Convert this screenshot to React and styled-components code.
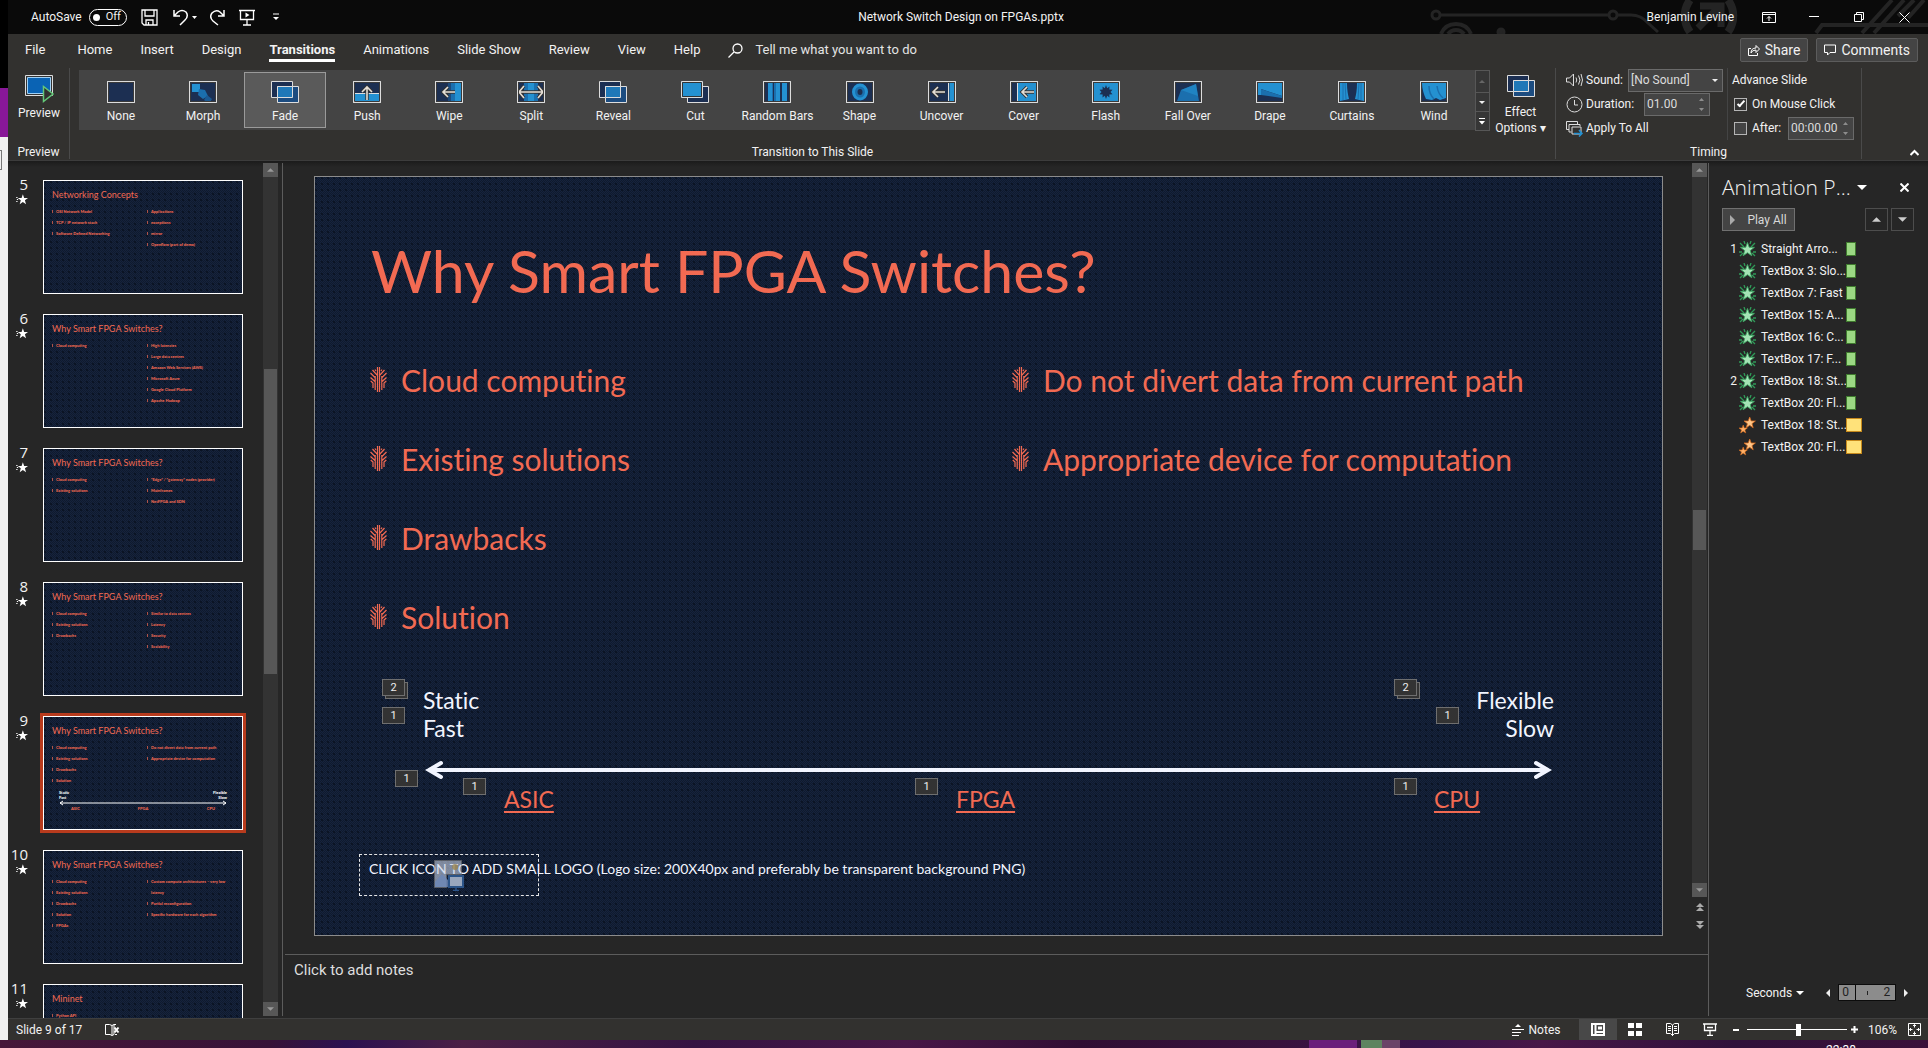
import React from "react";
import styled, { createGlobalStyle, css } from "styled-components";

const UI = `Roboto, "Open Sans", "Noto Sans", sans-serif`;
const LIGHT = `"Open Sans", "Noto Sans", sans-serif`;
const DECK = `Lato, "Open Sans", sans-serif`;
const CORAL = "#f26a52";

const Global = createGlobalStyle`
  *, *::before, *::after { box-sizing: border-box; }
  html, body, #root { height: 100%; margin: 0; }
  body { background: #262626; color: #f2f2f2; font: 12px/16px ${UI}; overflow: hidden; }
  button, input, select, textarea { font: inherit; color: inherit; margin: 0; }
  svg { display: block; flex: none; }
`;

/* ---------- shell ---------- */
const Desktop = styled.div`
  display: grid;
  grid-template: minmax(0, 1fr) 8px / 8px minmax(0, 1fr);
  height: 100vh;
  overflow: hidden;
`;
const BehindWindow = styled.aside`
  display: flex;
  flex-direction: column;
  background: #f0f0f0;
  overflow: hidden;
`;
const BehindBlock = styled.div`
  height: ${(p) => p.$h}px;
  background: ${(p) => p.$bg};
  ${(p) => p.$box && css`
    margin-top: 13px;
    width: 2px;
    border: solid #777;
    border-width: 1px 1px 1px 0;
  `}
`;
const Taskbar = styled.footer`
  grid-column: 1 / -1;
  display: flex;
  justify-content: flex-end;
  overflow: hidden;
  background: linear-gradient(90deg, #471739 0, #371237 14%, #2b1150 18%, #4b2045 24%, #351342 36%, #481747 47%, #300e33 56%, #38123c 66%, #37144a 74%, #481747 80%, #30113a 90%, #3b1039 100%);
`;
const TaskItem = styled.span`
  width: ${(p) => p.$w}px;
  margin-right: ${(p) => p.$gap || 0}px;
  background: ${(p) => p.$bg};
`;
const Clock = styled.time`
  width: 102px;
  padding-top: 2px;
  color: #fff;
`;
const Window = styled.div`
  display: flex;
  flex-direction: column;
  min-width: 0;
  min-height: 0;
`;
const Plain = styled.button`
  display: flex;
  align-items: center;
  justify-content: center;
  padding: 0;
  border: 0;
  background: none;
  white-space: nowrap;
`;

/* ---------- title bar ---------- */
const TitleBar = styled.header`
  position: relative;
  display: grid;
  grid-template-columns: 1fr auto 1fr;
  align-items: center;
  height: 34px;
  padding: 0 14px 0 0;
  background: #0a0a0a;
  flex: none;
`;
const Circuit = styled.svg`
  position: absolute;
  right: 0;
  top: 0;
`;
const QuickBar = styled.div`
  display: flex;
  align-items: center;
  gap: ${(p) => p.$gap}px;
  padding-left: ${(p) => p.$inset || 0}px;
`;
const Toggle = styled.button`
  display: flex;
  align-items: center;
  gap: 6px;
  width: 38px;
  height: 17px;
  padding: 0 3px;
  border: 1px solid #fff;
  border-radius: 9px;
  background: none;
  font-size: 11px;
  &::before { content: ""; width: 7px; height: 7px; border-radius: 50%; background: #fff; }
`;
const DocName = styled.h1`
  margin: 0;
  font: inherit;
`;
const WindowTools = styled.div`
  position: relative;
  display: flex;
  align-items: center;
  justify-content: flex-end;
  gap: 25px;
`;
const Tool = styled(Plain)`
  width: ${(p) => p.$w || 20}px;
  height: 20px;
`;

/* ---------- ribbon ---------- */
const TabRow = styled.nav`
  display: flex;
  align-items: center;
  gap: 28px;
  height: 32px;
  padding: 0 10px 0 17px;
  background: #32312f;
  flex: none;
`;
const Tab = styled(Plain)`
  height: 24px;
  font-weight: ${(p) => (p.$on ? 700 : 400)};
  border-bottom: 3px solid ${(p) => (p.$on ? "#fff" : "transparent")};
  border-top: 3px solid transparent;
  font-size: 13px;
  &:first-child { margin-right: 4px; }
`;
const Search = styled.label`
  display: flex;
  align-items: center;
  gap: 12px;
  flex: 1;
`;
const SearchBox = styled.input`
  flex: 1;
  padding: 0;
  border: 0;
  background: none;
  font-size: 13px;
  outline: 0;
  &::placeholder { color: #e4e4e4; opacity: 1; }
`;
const RowActions = styled.div`
  display: flex;
  gap: 8px;
`;
const Action = styled(Plain)`
  gap: 5px;
  height: 24px;
  margin-top: -1px;
  padding: 0 7px;
  border: 1px solid #5c5c5c;
  border-radius: 2px;
  background: #444;
  font-size: 14px;
`;
const Ribbon = styled.section`
  display: flex;
  height: 95px;
  padding: 2px 0 1px;
  background: #32312f;
  border-bottom: 1px solid #3c3c3c;
  flex: none;
`;
const Group = styled.div`
  display: flex;
  flex-direction: column;
  justify-content: space-between;
  flex: ${(p) => (p.$w ? `0 0 ${p.$w}px` : 1)};
  min-width: 0;
  border-right: 1px solid #4a4a4a;
`;
const GroupName = styled.div`
  text-align: center;
  line-height: 14px;
`;
const GroupBody = styled.div`
  display: flex;
  padding: ${(p) => p.$pad || "2px 0 0 9px"};
`;
const BigButton = styled(Plain)`
  flex-direction: column;
  justify-content: flex-start;
  width: ${(p) => p.$w}px;
  padding: 5px ${(p) => p.$right || 0}px 0 0;
  gap: ${(p) => p.$gap}px;
`;
const Gallery = styled.div`
  display: grid;
  grid-template-columns: repeat(17, minmax(0, 1fr)) 15px;
  flex: 1;
  height: 60px;
  padding-left: 1px;
  background: #444;
`;
const Effect = styled(Plain)`
  flex-direction: column;
  gap: 5px;
  height: 56px;
  margin: 2px 0;
  padding-top: 5px;
  border: 1px solid ${(p) => (p.$on ? "#9a9a9a" : "transparent")};
  background: ${(p) => (p.$on ? "#5a5a5a" : "none")};
`;
const GalleryScroll = styled.div`
  display: grid;
  grid-template-rows: 22px 19px 19px;
`;
const ScrollCell = styled(Plain)`
  border: 1px solid #575757;
  background: #363636;
  margin-bottom: -1px;
`;
const Timing = styled.div`
  display: grid;
  grid-template-columns: 161px 1fr;
  padding: 0 0 0 10px;
`;
const Rows = styled.div`
  display: grid;
  grid-template-rows: 24px 24px 24px;
  align-items: center;
  padding-left: ${(p) => (p.$line ? 4 : 0)}px;
  border-left: ${(p) => (p.$line ? "1px solid #444" : "0")};
`;
const Field = styled.div`
  display: flex;
  align-items: center;
  gap: 3px;
  white-space: nowrap;
`;
const ApplyAll = styled(Plain)`
  justify-content: flex-start;
  gap: 3px;
`;
const FieldLabel = styled.label`
  width: ${(p) => (p.$w ? `${p.$w}px` : "auto")};
`;
const Boxed = css`
  height: 23px;
  border: 1px solid #6a6a6a;
  background: #444;
  color: #dcdcdc;
`;
const SoundSelect = styled.select`
  ${Boxed}
  width: 95px;
  padding: 0 2px;
  border-radius: 0;
  appearance: none;
`;
const SelectWrap = styled.span`
  display: grid;
  align-items: center;
  & > * { grid-area: 1 / 1; }
  & > svg { justify-self: end; margin-right: 5px; pointer-events: none; }
`;
const Spinner = styled.span`
  ${Boxed}
  display: flex;
  align-items: center;
  width: 66px;
  padding: 0 4px 0 2px;
`;
const SpinInput = styled.input`
  flex: 1;
  width: 0;
  padding: 0;
  border: 0;
  background: none;
  outline: 0;
`;
const Check = styled.input`
  appearance: none;
  width: 13px;
  height: 13px;
  margin: 0 2px 0 2px;
  border: 1px solid #b5b5b5;
  background: ${(p) => (p.defaultChecked ? "#333" : "#444")};
  display: grid;
  place-items: center;
  &:checked::after { content: ""; width: 4px; height: 8px; margin-top: -2px; border: solid #fff; border-width: 0 2px 2px 0; transform: rotate(42deg); }
`;
const Collapse = styled(Plain)`
  width: 66px;
  align-self: flex-end;
  height: 14px;
  padding-left: 38px;
`;

/* ---------- workspace ---------- */
const Workspace = styled.main`
  display: grid;
  grid-template-columns: 275px minmax(0, 1fr) 219px;
  flex: 1;
  min-height: 0;
  padding: 2px 0;
  background: linear-gradient(#1b1b1b, #262626 6px);
`;
const ThumbPane = styled.section`
  display: flex;
  border-right: 1px solid #5c5c5c;
  min-height: 0;
`;
const ThumbList = styled.ol`
  list-style: none;
  flex: 1;
  margin: 0 0 -2px;
  padding: 14px 0 0;
  overflow: hidden;
`;
const ThumbItem = styled.li`
  display: grid;
  grid-template-columns: 20px 206px;
  gap: 12px;
  height: 134px;
`;
const ThumbMeta = styled.div`
  display: flex;
  flex-direction: column;
  align-items: flex-end;
  font: 15px/14px ${LIGHT};
  gap: 3px;
`;
const dots = css`
  background-color: #121d33;
  background-image: radial-gradient(circle at 1px 1px, #0b1424 1px, transparent 1px),
    conic-gradient(#0f1a2d 25%, #16233d 0 50%, #0f1a2d 0 75%, #16233d 0);
  background-size: 6px 6px, 2px 2px;
`;
const Thumb = styled.article`
  height: 120px;
  border: 3px solid ${(p) => (p.$on ? "#b83b1d" : "transparent")};
`;
const ThumbSlide = styled.div`
  ${dots}
  height: 114px;
  padding: 6px 8px;
  border: 1px solid #fff;
  color: ${CORAL};
  overflow: hidden;
`;
const ThumbTitle = styled.h2`
  margin: 0 0 3px;
  font: 9px/16px ${DECK};
`;
const ThumbCols = styled.div`
  display: grid;
  grid-template-columns: 95px 1fr;
  font: 900 4px/11px ${DECK};
`;
const ThumbLines = styled.ul`
  margin: 0;
  padding: 0 0 0 4px;
  list-style: none;
  li { position: relative; white-space: pre-line; }
  li::before { content: ""; position: absolute; left: -4px; top: 4px; width: 1px; height: 3px; background: ${CORAL}; opacity: 0.7; }
`;
const MiniScale = styled.div`
  display: grid;
  grid-template-columns: 1fr 1fr 1fr;
  margin: 4px 7px 0;
  font: 900 4px/5px ${DECK};
  color: #fff;
  svg { grid-column: 1 / -1; width: 100%; }
`;
const MiniCell = styled.span`
  padding: 0 ${(p) => p.$pad || 0}px;
  text-align: ${(p) => p.$align || "left"};
  color: ${(p) => p.$color || "#fff"};
  white-space: pre-line;
`;
const ScrollBar = styled.div`
  display: flex;
  flex-direction: column;
  flex: none;
  width: 15px;
  background: #333;
  margin-right: ${(p) => p.$right}px;
`;
const ScrollButton = styled(Plain)`
  height: 14px;
  background: #575757;
  flex: none;
`;
const Track = styled.div`
  display: grid;
  grid-template-rows: ${(p) => p.$rows};
  flex: 1;
  &::before { content: ""; }
`;
const Grip = styled.div`
  margin: 0 1px;
  background: #575757;
`;
const Pager = styled.div`
  display: flex;
  flex-direction: column;
  align-items: center;
  gap: 10px;
  height: 57px;
  padding-top: 6px;
  background: #262626;
`;

const Editor = styled.section`
  display: grid;
  grid-template-rows: minmax(0, 1fr) 62px;
  border-right: 1px solid #5c5c5c;
  min-height: 0;
`;
const Stage = styled.div`
  display: flex;
  min-height: 0;
`;
const StageArea = styled.div`
  flex: 1;
  min-width: 0;
  padding: 13px 29px 0 31px;
`;
const Slide = styled.article`
  ${dots}
  position: relative;
  aspect-ratio: 1349 / 760;
  border: 1px solid #8c8c8c;
  color: ${CORAL};
  font-family: ${DECK};
  font-variant-ligatures: none;
  overflow: hidden;
`;
const SlideTitle = styled.h2`
  margin: 54px 0 0 56px;
  font-size: 59px;
  line-height: 80px;
  font-weight: 400;
`;
const Columns = styled.div`
  display: grid;
  grid-template-columns: 642px 1fr;
  margin: 44px 0 0 55px;
`;
const Bullets = styled.ul`
  margin: 0;
  padding: 0;
  list-style: none;
`;
const Bullet = styled.li`
  display: flex;
  align-items: center;
  gap: 14px;
  height: 49px;
  margin-bottom: 30px;
  font-size: 30px;
`;
const Scale = styled.div`
  margin: 15px 108px 0 108px;
  font-size: 23px;
  line-height: 28px;
`;
const ScaleEnds = styled.div`
  display: flex;
  justify-content: space-between;
  color: #f2f5ff;
  white-space: pre-line;
  div + div { text-align: right; }
`;
const Arrow = styled.svg`
  width: 100%;
  height: 20px;
  margin-top: 18px;
`;
const Devices = styled.div`
  display: grid;
  grid-template-columns: 452fr 478fr 120fr;
  justify-items: start;
  padding: 5px 0 0 81px;
`;
const Device = styled.a`
  color: ${CORAL};
  text-underline-offset: 3px;
`;
const Tag = styled.span`
  position: absolute;
  left: ${(p) => p.$x}px;
  top: ${(p) => p.$y}px;
  width: 23px;
  height: 17px;
  border: 1px solid #6f6f6f;
  background: #333;
  color: #eee;
  font: 11px/15px ${UI};
  text-align: center;
  box-shadow: ${(p) => (p.$stack ? "3px 3px 0 -1px #333, 3px 3px 0 0 #6f6f6f" : "none")};
`;
const LogoSlot = styled.div`
  position: absolute;
  left: 44px;
  top: 677px;
  width: 180px;
  height: 42px;
  padding: 4px 9px;
  border: 1px dashed #e6e6e6;
  color: #f2f5ff;
  font-size: 14px;
  line-height: 20px;
  white-space: nowrap;
`;
const SlotIcon = styled.svg`
  position: absolute;
  left: 74px;
  top: 5px;
`;
const Notes = styled.textarea`
  padding: 5px 9px;
  border: 0;
  border-top: 1px solid #5c5c5c;
  margin-left: 2px;
  background: none;
  resize: none;
  outline: 0;
  font-size: 15px;
  line-height: 20px;
  &::placeholder { color: #dedede; opacity: 1; }
`;

/* ---------- animation pane ---------- */
const AnimPane = styled.aside`
  display: flex;
  flex-direction: column;
  padding: 9px 14px 15px 13px;
`;
const PaneHead = styled.div`
  display: flex;
  align-items: center;
  height: 30px;
  margin-bottom: 6px;
`;
const PaneTitle = styled.h2`
  width: 135px;
  margin: 0;
  font: 300 21px/30px ${LIGHT};
  white-space: nowrap;
`;
const PaneTools = styled.div`
  display: flex;
  gap: 3px;
  justify-content: flex-end;
  margin-bottom: 7px;
`;
const PaneButton = styled(Plain)`
  height: 23px;
  width: ${(p) => p.$w || 23}px;
  gap: 12px;
  border: 1px solid ${(p) => (p.$w ? "#707070" : "#4d4d4d")};
  background: ${(p) => (p.$w ? "#444" : "none")};
  margin-right: ${(p) => (p.$w ? "auto" : 0)};
  color: #d8d8d8;
`;
const AnimList = styled.ol`
  list-style: none;
  flex: 1;
  margin: 0;
  padding: 0;
`;
const AnimItem = styled.li`
  display: grid;
  grid-template-columns: 15px 20px 81px auto;
  gap: 2px;
  align-items: center;
  justify-content: start;
  height: 22px;
  white-space: nowrap;
`;
const Order = styled.span`
  text-align: right;
`;
const Bar = styled.span`
  width: ${(p) => (p.$exit ? 16 : 10)}px;
  height: 14px;
  margin-left: 2px;
  border: 1px solid ${(p) => (p.$exit ? "#c78a1c" : "#3f7a2e")};
  background: ${(p) => (p.$exit ? "#ffe27a" : "#9bd883")};
`;
const Timeline = styled.div`
  display: flex;
  align-items: center;
  gap: 5px;
  padding-left: 24px;
`;
const Range = styled.div`
  display: grid;
  grid-template-columns: 16px 1fr;
  flex: none;
  width: 58px;
  height: 17px;
  margin: 0 3px;
  border: 1px solid #0c0c0c;
  background: #8c8c8c;
  color: #222;
  line-height: 15px;
`;
const RangeCell = styled.span`
  display: flex;
  justify-content: space-between;
  padding: 0 5px 0 ${(p) => (p.$wide ? 11 : 3)}px;
  border-left: ${(p) => (p.$wide ? "1px solid #0c0c0c" : "0")};
  i { align-self: center; width: 1px; height: 4px; background: #222; }
`;
const Unit = styled(Plain)`
  gap: 4px;
  margin-right: 17px;
`;

/* ---------- status bar ---------- */
const StatusBar = styled.div`
  display: flex;
  align-items: center;
  height: 22px;
  padding: 0 3px 0 8px;
  background: #32312f;
  border-top: 1px solid #3f3f3f;
  flex: none;
`;
const Spring = styled.span`
  flex: 1;
`;
const StatusButton = styled(Plain)`
  width: ${(p) => p.$w || 36}px;
  height: 21px;
  gap: 5px;
  background: ${(p) => (p.$on ? "#484848" : "none")};
`;
const Zoom = styled.input`
  appearance: none;
  width: 100px;
  height: 14px;
  margin: 0 3px;
  background: linear-gradient(#fff, #fff) no-repeat center / 100% 1px;
  &::-webkit-slider-thumb { appearance: none; width: 5px; height: 12px; background: #fff; }
`;
const Percent = styled.button`
  width: 45px;
  padding: 0 0 0 4px;
  border: 0;
  background: none;
`;

/* ---------- icons ---------- */
const Svg = ({ w, h, children, s = "#fff", f = "none", sw = 1, vb }) => (
  <svg width={w} height={h} viewBox={vb || `0 0 ${w} ${h}`} fill={f} stroke={s} strokeWidth={sw} aria-hidden="true">{children}</svg>
);
const Tri = ({ dir = "down", w = 7, c = "#eee" }) => {
  const d = { down: "M0 0H8L4 4Z", up: "M0 4H8L4 0Z" }[dir];
  return <Svg w={w} h={w / 2 + (w % 2) / 2} vb="0 0 8 4" s="none" f={c}><path d={d} /></Svg>;
};
const Side = ({ left, c = "#eee", s = 10 }) => (
  <Svg w={s / 2} h={s} vb="0 0 5 10" s="none" f={c}><path d={left ? "M5 0V10L0 5Z" : "M0 0V10L5 5Z"} /></Svg>
);
const D = "#1c2f52";
const B = "#2491d1";
const M = "#1b6fae";
const arrow = (d) => (
  <g fill="none"><path d={d} stroke="#333" strokeWidth="3.4" /><path d={d} stroke="#e6dfd6" strokeWidth="1.6" /></g>
);
const art = {
  None: null,
  Morph: <g stroke="none"><path d="M3 3h8v8H3z" fill={B} /><path d="m10 8 6 1 3 6-5 3-5-4z" fill={M} /><path d="m18 14 5 4-3 5-5-4z" fill="#1b5a94" /></g>,
  Push: <g><path d="M1.500 12.500h25v9h-25z" fill={B} stroke="#ddd" />{arrow("M14 19V6M9 11l5-5 5 5")}</g>,
  Wipe: <g><path d="M13 2h3v18h-3z" fill="#1c4a7c" stroke="none" /><path d="M16 2h4v18h-4z" fill={M} stroke="none" /><path d="M20 2h6v18h-6z" fill={B} stroke="none" />{arrow("M20 11H8M13 6l-5 5 5 5")}</g>,
  Split: <g><path d="M7 2h14v18H7z" fill={M} stroke="none" /><path d="M11 2h6v18h-6z" fill={B} stroke="none" />{arrow("M3 11H25M7 5l-5 6 5 6M21 5l5 6-5 6")}</g>,
  "Random Bars": <g stroke="none" fill={B}><path d="M5 2h4v18H5zM13 2h4v18h-4zM19 2h5v18h-5z" /><path fill={M} d="M11 2h2v18h-2zM9 2h1v18H9z" /></g>,
  Shape: <g stroke="none"><ellipse cx="14" cy="11" rx="8" ry="8.500" fill={B} /><ellipse cx="14" cy="11" rx="5" ry="5.500" fill={M} /><ellipse cx="14" cy="11" rx="2.500" ry="3" fill={D} /></g>,
  Uncover: <g><path d="M20.500 1v20" stroke="#ddd" /><path d="M21.500 2H26v18h-4.500z" fill={B} stroke="none" />{arrow("M17 11H5M10 6l-5 5 5 5")}</g>,
  Cover: <g><path d="M8 2h18v18H8z" fill={B} stroke="none" /><path d="M7.500 1v20" stroke="#ddd" />{arrow("M24 11H12M17 6l-5 5 5 5")}</g>,
  Flash: <g stroke="none"><path d="M2 2h24v18H2z" fill={B} /><path fill={D} d="m14 4 1.200 3.300L17.500 5.500l-.2 3L20.500 8.700 18.500 11l2 2.300-3.200.2.200 3-2.300-1.800L14 18l-1.200-3.300-2.300 1.800.2-3-3.200-.2L9.500 11l-2-2.300 3.200-.2-.2-3 2.300 1.800z" /></g>,
  "Fall Over": <g stroke="none"><path d="m3 20 4-11L22 3l3 17z" fill={M} /><path d="M7 9 22 3l2 12z" fill={B} opacity=".6" /></g>,
  Drape: <g stroke="none"><path d="M2 2h24v13L5 8v6H2z" fill={B} /><path d="m5 8 21 7v2L5 14z" fill={M} /></g>,
  Curtains: <g stroke="none"><path d="M2 2h7c0 7 1 12 2 16l-9 2zM26 2h-7c0 7-1 12-2 16l9 2z" fill={B} /><path d="M5 2v17M7 2l1 16M23 2v17M21 2l-1 16" stroke={M} /></g>,
  Wind: <g stroke="none"><path d="M2 2h24v15l-6 2-4-2-4 2-6-1C4 14 2 8 2 2z" fill={B} /><path d="M9 5q0 8 5 13M17 5q1 8 6 12" stroke={M} strokeWidth="1.500" fill="none" /></g>,
};
const Overlap = ({ cut }) => (
  <Svg w={28} h={22} s="#ddd">
    {cut ? (
      <g><path d="M6.500 5.500h21v16h-21z" fill={D} /><path d="M.5.500h21v16H.5z" fill={B} stroke="#ddd" /><path d="M1.500 1.500h19v14h-19z" stroke="#333" /></g>
    ) : (
      <g><path d="M.5.500h21v16H.5z" fill={D} /><path d="M6.500 5.500h21v16h-21z" fill="#1c4c80" /><path d="M6.500 5.500h15v11h-15z" fill="#1f78b8" /></g>
    )}
  </Svg>
);
const EffectIcon = ({ name }) =>
  ["Fade", "Reveal", "Cut"].includes(name) ? <Overlap cut={name === "Cut"} /> : (
    <Svg w={28} h={22} s="#ddd">
      <path d="M.5.500h27v21H.5z" fill={D} />
      {art[name]}
      <path d="M1.500 1.500h25v19h-25z" stroke="#3a3a3a" />
      <path d="M.5.500h27v21H.5z" />
    </Svg>
  );
const Leaf = () => (
  <Svg w={17} h={25} s={CORAL} sw={1.2}>
    <path d="M7.500 0v25M9.500 0v25M5.200 9v14M11.800 9v14M7 8 2.500 3M10 8 14.500 3M5.500 11 .5 6M11.500 11l5-5M5.500 15 .5 10.500M11.500 15l5-4.500M3 21v-5L.7 14M14 21v-5l2.300-2M6 4 5 2.500M11 4l1-1.500" />
  </Svg>
);
const StarPath = "M6 0l1.500 4.200H12L8.400 7 9.700 11.400 6 8.800 2.300 11.400 3.600 7 0 4.200h4.500z";
const MotionStar = () => (
  <Svg w={12} h={11} vb="0 0 14 12" s="none" f="#fff">
    <path transform="translate(2 0)" d={StarPath} /><path d="M0 3h2v1H0zM0 8h2v1H0zM1 5.500h1.500v1H1z" />
  </Svg>
);
const Entrance = () => (
  <Svg w={17} h={17} s="#2f9a58">
    <path d="M1 2l4 4M16 2l-4 4M1 15l3-3M16 15l-3-3M0 11h3M14 11h3M5 0l1 3M12 0l-1 3" strokeWidth="1.300" />
    <path transform="translate(1.500 1.500) scale(1.160)" d={StarPath} fill="#a5e3b5" stroke="#3fa763" strokeWidth=".8" />
  </Svg>
);
const Exit = () => (
  <Svg w={17} h={17} s="#d96a1a" sw={0.8}>
    <path transform="translate(5 0) scale(.95)" d={StarPath} fill="#ffc78a" /><path transform="translate(0 8) scale(.7)" d={StarPath} fill="#ffb066" />
  </Svg>
);

/* ---------- data ---------- */
const effects = ["None", "Morph", "Fade", "Push", "Wipe", "Split", "Reveal", "Cut", "Random Bars", "Shape", "Uncover", "Cover", "Flash", "Fall Over", "Drape", "Curtains", "Wind"];
const tabs = ["File", "Home", "Insert", "Design", "Transitions", "Animations", "Slide Show", "Review", "View", "Help"];
const why = "Why Smart FPGA Switches?";
const slides = [
  [5, "Networking Concepts", ["OSI Network Model", "TCP / IP network stack", "Software Defined Networking"], ["Applications", "exceptions", "mirror", "Openflow (part of demo)"]],
  [6, why, ["Cloud computing"], ["High latencies", "Large data centres", "Amazon Web Services (AWS)", "Microsoft Azure", "Google Cloud Platform", "Apache Hadoop"]],
  [7, why, ["Cloud computing", "Existing solutions"], ["“Edge” / “gateway” nodes (provider)", "Mainframes", "NetFPGA and SDN"]],
  [8, why, ["Cloud computing", "Existing solutions", "Drawbacks"], ["Similar to data centres", "Latency", "Security", "Scalability"]],
  [9, why, ["Cloud computing", "Existing solutions", "Drawbacks", "Solution"], ["Do not divert data from current path", "Appropriate device for computation"]],
  [10, why, ["Cloud computing", "Existing solutions", "Drawbacks", "Solution", "FPGAs"], ["Custom compute architectures – very low\nlatency", "Partial reconfiguration", "Specific hardware for each algorithm"]],
  [11, "Mininet", ["Python API"], []],
];
const current = slides[4];
const tags = [
  [67, 502, 2, true], [67, 530, 1], [80, 593, 1], [148, 601, 1], [600, 601, 1],
  [1079, 502, 2, true], [1121, 530, 1], [1079, 601, 1],
];
const anims = [
  ["1", "Straight Arro..."], ["", "TextBox 3: Slo..."], ["", "TextBox 7: Fast"], ["", "TextBox 15: A..."], ["", "TextBox 16: C..."],
  ["", "TextBox 17: F..."], ["2", "TextBox 18: St..."], ["", "TextBox 20: Fl..."], ["", "TextBox 18: St...", true], ["", "TextBox 20: Fl...", true],
];

const Lines = ({ items }) => <ThumbLines>{items.map((t) => <li key={t}>{t}</li>)}</ThumbLines>;
const BulletList = ({ items }) => (
  <Bullets>{items.map((t) => <Bullet key={t}><Leaf />{t}</Bullet>)}</Bullets>
);
const SpinArrows = () => (
  <Svg w={7} h={15} s="none" f="#8d8d8d"><path d="M1 4h5L3.500 1zM1 11h5l-2.500 3z" /></Svg>
);

function Title() {
  return (
    <TitleBar>
      <Circuit width="500" height="34" viewBox="0 0 500 34" fill="none" stroke="#242424" strokeWidth="3" aria-hidden="true">
        <circle cx="8" cy="15" r="4" /><path d="M12 15h169M189 15h14q10 0 17 8l10 9" /><circle cx="185" cy="15" r="4" />
        <path d="M13 34q4-10 15-10t15 10M20 34q3-4 8-4t8 4" strokeWidth="4" /><circle cx="73" cy="32" r="3" fill="#242424" />
        <path d="M262 0a27 27 0 0 0 0 32M300 0a27 27 0 0 1 0 32" strokeWidth="8" />
        <path d="m270 28 20-20M272 6h21v21" strokeWidth="7" />
        <path d="m388 33 6-8h106M434 33l30-33M446 33l30-33M470 16l16-16M480 18l16-18" strokeWidth="4" />
      </Circuit>
      <QuickBar $gap={14} $inset={23}>
        <QuickBar $gap={7}>AutoSave <Toggle aria-label="AutoSave">Off</Toggle></QuickBar>
        <Tool $w={18} aria-label="Save"><Svg w={17} h={17} sw={1.3}><path d="M1 1h15v15H3l-2-2zM4 1v6h9V1M5 16v-5h7v5M7.500 13v3" /></Svg></Tool>
        <Tool $w={24} aria-label="Undo"><Svg w={24} h={17} sw={1.5}><path d="M1 1v6h6M1 7l4-4q4-3 8 0 3 4-1 8l-5 5" /><path d="M19 7h5l-2.500 3z" fill="#fff" stroke="none" /></Svg></Tool>
        <Tool $w={14} aria-label="Redo"><Svg w={15} h={17} sw={1.5}><path d="M14 1v6H8M14 7l-4-4Q6 0 2 4q-3 4 1 8l5 4" /></Svg></Tool>
        <Tool $w={16} aria-label="Start slide show"><Svg w={16} h={17} sw={1.3}><path d="M0 1.500h16M1.500 1.500v9h13v-9M8 10.500V16M4 16h8" /><path d="m6.500 3.500 4 2.500-4 2.500z" fill="#fff" stroke="none" /></Svg></Tool>
        <Tool $w={14} aria-label="Customize toolbar"><Svg w={6} h={8}><path d="M0 1h6" /><path d="M0 4h6L3 7z" fill="#fff" stroke="none" /></Svg></Tool>
      </QuickBar>
      <DocName>Network Switch Design on FPGAs.pptx</DocName>
      <WindowTools>
        Benjamin Levine
        <Tool aria-label="Ribbon display options"><Svg w={14} h={11}><path d="M.5.500h13v10H.5zM.5 2.500h13M7 9V4.500M5 6.500l2-2 2 2" /></Svg></Tool>
        <Tool aria-label="Minimize"><Svg w={10} h={2}><path d="M0 .5h10" /></Svg></Tool>
        <Tool aria-label="Restore"><Svg w={10} h={10}><path d="M.5 2.500h7v7h-7zM2.500 2.500v-2h7v7h-2" /></Svg></Tool>
        <Tool aria-label="Close"><Svg w={11} h={11}><path d="m.5.500 10 10M10.500.5l-10 10" /></Svg></Tool>
      </WindowTools>
    </TitleBar>
  );
}

function RibbonArea() {
  return (
    <>
      <TabRow>
        {tabs.map((t) => <Tab key={t} $on={t === "Transitions"}>{t}</Tab>)}
        <Search>
          <Svg w={15} h={15} sw={1.3}><circle cx="9.500" cy="5.500" r="4.500" /><path d="M6 9l-5.500 5.500" /></Svg>
          <SearchBox aria-label="Tell me what you want to do" placeholder="Tell me what you want to do" />
        </Search>
        <RowActions>
          <Action><Svg w={12} h={12}><path d="M3 4.500H.5v7h9V9M3 9q0-5 5-5V1.500L11.500 5 8 8.500V6Q4 6 3 9z" /></Svg>Share</Action>
          <Action><Svg w={12} h={12}><path d="M.5 1h11v7.500H6L3.500 11V8.500h-3z" /></Svg>Comments</Action>
        </RowActions>
      </TabRow>
      <Ribbon>
        <Group $w={62}>
          <GroupBody $pad="2px 0 0 4px">
            <BigButton $w={54} $gap={1}>
              <Svg w={31} h={29} s="#ddd"><path d="M1.500.500h27v20h-27z" fill="#333" /><path d="M3.500 2.500h23v16h-23z" fill="#0a63b4" stroke="#9fd0f5" /><path d="M19.500 11.500v15l9.500-7.500z" fill="#32312f" stroke="#63c878" strokeWidth="1.500" /></Svg>
              Preview
            </BigButton>
          </GroupBody>
          <GroupName>Preview</GroupName>
        </Group>
        <Group>
          <GroupBody>
            <Gallery>
              {effects.map((e) => <Effect key={e} $on={e === "Fade"}><EffectIcon name={e} />{e}</Effect>)}
              <GalleryScroll>
                <ScrollCell aria-label="Previous effects"><Tri dir="up" w={6} c="#666" /></ScrollCell>
                <ScrollCell aria-label="Next effects"><Tri w={6} /></ScrollCell>
                <ScrollCell aria-label="More effects"><Svg w={6} h={7}><path d="M0 .5h6" /><path d="M0 3h6L3 6.500z" fill="#fff" stroke="none" /></Svg></ScrollCell>
              </GalleryScroll>
            </Gallery>
            <BigButton $w={65} $gap={7} $right={4}>
              <Overlap />
              <span>Effect<br />Options ▾</span>
            </BigButton>
          </GroupBody>
          <GroupName>Transition to This Slide</GroupName>
        </Group>
        <Group $w={306}>
          <Timing>
            <Rows>
              <Field>
                <Svg w={17} h={14} s="#ddd"><path d="M.5 5v4h3l4 4V1l-4 4zM10 4.500q1.500 2.500 0 5M12.500 2.500q3 4.500 0 9M15 1q3 6 0 12" /></Svg>
                <FieldLabel htmlFor="sound" $w={39}>Sound:</FieldLabel>
                <SelectWrap><SoundSelect id="sound"><option>[No Sound]</option></SoundSelect><Tri w={6} /></SelectWrap>
              </Field>
              <Field>
                <Svg w={17} h={17} s="#ddd"><circle cx="8.500" cy="8.500" r="7.500" /><path d="M8.500 4v5H12" /></Svg>
                <FieldLabel htmlFor="duration" $w={55}>Duration:</FieldLabel>
                <Spinner><SpinInput id="duration" defaultValue="01.00" /><SpinArrows /></Spinner>
              </Field>
              <ApplyAll>
                <Svg w={17} h={17} s="#ddd"><path d="M3 9.500H.5v-8h11V4M5.500 12H3V4.500h11V6M6 7h9v7H6z" /><path d="M8 13.500h8M13 10l3 3.500-3 3" stroke={B} strokeWidth="1.500" /></Svg>
                Apply To All
              </ApplyAll>
            </Rows>
            <Rows $line>
              <span>Advance Slide</span>
              <Field><Check id="click" type="checkbox" defaultChecked /><FieldLabel htmlFor="click">On Mouse Click</FieldLabel></Field>
              <Field>
                <Check id="after" type="checkbox" /><FieldLabel htmlFor="after" $w={33}>After:</FieldLabel>
                <Spinner><SpinInput aria-label="After" defaultValue="00:00.00" /><SpinArrows /></Spinner>
              </Field>
            </Rows>
          </Timing>
          <GroupName>Timing</GroupName>
        </Group>
        <Collapse aria-label="Collapse ribbon"><Svg w={9} h={7} sw={2}><path d="M.5 6 4.500 2l4 4" /></Svg></Collapse>
      </Ribbon>
    </>
  );
}

function Thumbs() {
  return (
    <ThumbPane>
      <ThumbList>
        {slides.map(([n, title, left, right]) => (
          <ThumbItem key={n}>
            <ThumbMeta>{n}<MotionStar /></ThumbMeta>
            <Thumb $on={n === 9}>
              <ThumbSlide>
                <ThumbTitle>{title}</ThumbTitle>
                <ThumbCols><Lines items={left} /><Lines items={right} /></ThumbCols>
                {n === 9 && (
                  <MiniScale>
                    <MiniCell>{"Static\nFast"}</MiniCell><MiniCell /><MiniCell $align="right">{"Flexible\nSlow"}</MiniCell>
                    <svg height="6" viewBox="0 0 168 6" preserveAspectRatio="none" stroke="#fff" fill="none"><path d="M1 3h166M4 1 1 3l3 2M164 1l3 2-3 2" /></svg>
                    <MiniCell $pad={12} $color={CORAL}>ASIC</MiniCell><MiniCell $align="center" $color={CORAL}>FPGA</MiniCell><MiniCell $align="right" $pad={12} $color={CORAL}>CPU</MiniCell>
                  </MiniScale>
                )}
              </ThumbSlide>
            </Thumb>
          </ThumbItem>
        ))}
      </ThumbList>
      <ScrollBar $right={4}>
        <ScrollButton aria-label="Scroll slides up"><Tri dir="up" c="#999" /></ScrollButton>
        <Track $rows="192fr 305fr 328fr"><Grip /></Track>
        <ScrollButton aria-label="Scroll slides down"><Tri c="#999" /></ScrollButton>
      </ScrollBar>
    </ThumbPane>
  );
}

function MainSlide() {
  return (
    <Slide>
      <SlideTitle>{current[1]}</SlideTitle>
      <Columns><BulletList items={current[2]} /><BulletList items={current[3]} /></Columns>
      <Scale>
        <ScaleEnds><div>{"Static\nFast"}</div><div>{"Flexible\nSlow"}</div></ScaleEnds>
        <Arrow viewBox="0 0 1132 20" fill="none" stroke="#f2f5ff" strokeWidth="4" strokeLinecap="round" aria-hidden="true">
          <path d="M6 10h1120M18 3 6 10l12 7M1114 3l12 7-12 7" />
        </Arrow>
        <Devices><Device href="#asic">ASIC</Device><Device href="#fpga">FPGA</Device><Device href="#cpu">CPU</Device></Devices>
      </Scale>
      {tags.map(([x, y, n, stack]) => <Tag key={`${x}-${y}`} $x={x} $y={y} $stack={stack}>{n}</Tag>)}
      <LogoSlot>
        CLICK ICON TO ADD SMALL LOGO (Logo size: 200X40px and preferably be transparent background PNG)
        <SlotIcon width="32" height="31" viewBox="0 0 32 31" aria-hidden="true">
          <path d="M.5.500h27v14h-15v13H.5z" fill="#c9d3e6" opacity=".6" stroke="#888" />
          <circle cx="21" cy="7" r="3" fill="#9a8550" opacity=".8" />
          <path d="M1 27V22L8 14l6 6v7z" fill="#6c87b8" opacity=".8" />
          <path d="M15 16h14v11H15z" fill="#9aa7bd" stroke="#2c5488" strokeWidth="2" /><path d="M22 27v3M19 30.500h6" stroke="#2c5488" strokeWidth="1.500" />
        </SlotIcon>
      </LogoSlot>
    </Slide>
  );
}

function Animations() {
  return (
    <AnimPane>
      <PaneHead>
        <PaneTitle>Animation P...</PaneTitle>
        <Plain aria-label="Pane options"><Tri w={10} c="#fff" /></Plain>
        <Spring />
        <Tool $w={20} aria-label="Close pane"><Svg w={9} h={9} sw={2}><path d="m.5.500 8 8M8.500.5l-8 8" /></Svg></Tool>
      </PaneHead>
      <PaneTools>
        <PaneButton $w={73}><Side c="#aaa" />Play All</PaneButton>
        <PaneButton aria-label="Move up"><Tri dir="up" w={9} c="#ccc" /></PaneButton>
        <PaneButton aria-label="Move down"><Tri w={9} c="#ccc" /></PaneButton>
      </PaneTools>
      <AnimList>
        {anims.map(([n, t, exit]) => (
          <AnimItem key={t + exit}><Order>{n}</Order>{exit ? <Exit /> : <Entrance />}<span>{t}</span><Bar $exit={exit} /></AnimItem>
        ))}
      </AnimList>
      <Timeline>
        <Unit>Seconds <Tri w={8} c="#fff" /></Unit>
        <Plain aria-label="Earlier"><Side left s={8} /></Plain>
        <Range><RangeCell>0</RangeCell><RangeCell $wide><i />2</RangeCell></Range>
        <Plain aria-label="Later"><Side s={8} /></Plain>
      </Timeline>
    </AnimPane>
  );
}

function Status() {
  return (
    <StatusBar>
      <span>Slide 9 of 17</span>
      <StatusButton $w={60} aria-label="Spelling"><Svg w={15} h={13}><path d="M.5 1.500h4l2.500 1 2-1v10l-2 1-2-1H.5zM7 2.500v10M10 11.500h2M9 1.500h2" /><path d="m9.500 4.500 4 5M13.500 4.500l-4 5" strokeWidth="2" /></Svg></StatusButton>
      <Spring />
      <StatusButton $w={86}><Svg w={12} h={13}><path d="M0 6.500h12M0 9.500h9M0 12.500h7" /><path d="M3 4h6L6 1z" fill="#fff" stroke="none" /></Svg>Notes</StatusButton>
      <StatusButton $w={38} $on aria-label="Normal view"><Svg w={14} h={13} sw={2}><path d="M1 1h12v11H1zM4.500 1v11M4.500 9H13" /><path d="M7 3.500h4v3H7z" fill="#fff" stroke="none" /></Svg></StatusButton>
      <StatusButton aria-label="Slide sorter"><Svg w={14} h={13} s="none" f="#fff"><path d="M0 0h6v5H0zM8 0h6v5H8zM0 8h6v5H0zM8 8h6v5H8z" /></Svg></StatusButton>
      <StatusButton $w={39} aria-label="Reading view"><Svg w={13} h={13}><path d="M6.500 2v11M.5.500h4l2 1.500 2-1.500h4v10h-4l-2 2-2-2h-4zM2 3.500h3M2 5.500h3M2 7.500h3M8 3.500h3M8 5.500h3M8 7.500h3" /></Svg></StatusButton>
      <StatusButton aria-label="Slide show"><Svg w={14} h={13}><path d="M0 1h14M1.500 1v6.500h11V1M7 7.500V12M4 12.500h6M4 4.500h6" strokeWidth="1.300" /></Svg></StatusButton>
      <StatusButton $w={16} aria-label="Zoom out"><Svg w={6} h={2} sw={2}><path d="M0 1h6" /></Svg></StatusButton>
      <Zoom type="range" min="0" max="100" defaultValue="52" aria-label="Zoom" />
      <StatusButton $w={8} aria-label="Zoom in"><Svg w={7} h={7} sw={2}><path d="M0 3.500h7M3.500 0v7" /></Svg></StatusButton>
      <Percent>106%</Percent>
      <StatusButton $w={22} aria-label="Fit slide"><Svg w={13} h={13}><path d="M.5.500h12v12H.5zM6.500 1.500v3M6.500 8.500v3M1.500 6.500h3M8.500 6.500h3M5 3l1.500-1.500L8 3M5 10l1.500 1.500L8 10M3 5 1.500 6.500 3 8M10 5l1.500 1.500L10 8" /></Svg></StatusButton>
    </StatusBar>
  );
}

export default function App() {
  return (
    <Desktop>
      <Global />
      <BehindWindow>
        <BehindBlock $h={88} $bg="#000" /><BehindBlock $h={49} $bg="#881798" /><BehindBlock $h={20} $box />
      </BehindWindow>
      <Window>
        <Title />
        <RibbonArea />
        <Workspace>
          <Thumbs />
          <Editor>
            <Stage>
              <StageArea><MainSlide /></StageArea>
              <ScrollBar $right={1}>
                <ScrollButton aria-label="Previous"><Tri dir="up" c="#999" /></ScrollButton>
                <Track $rows="333fr 40fr 333fr"><Grip /></Track>
                <ScrollButton aria-label="Next"><Tri c="#999" /></ScrollButton>
                <Pager><Svg w={8} h={8} s="none" f="#aaa"><path d="M0 4h8L4 0zM0 8h8L4 4z" /></Svg><Svg w={8} h={8} s="none" f="#aaa"><path d="M0 0h8L4 4zM0 4h8L4 8z" /></Svg></Pager>
              </ScrollBar>
            </Stage>
            <Notes aria-label="Notes" placeholder="Click to add notes" />
          </Editor>
          <Animations />
        </Workspace>
        <Status />
      </Window>
      <Taskbar>
        <TaskItem $w={48} $gap={4} $bg="#6a1f7a" /><TaskItem $w={21} $bg="#5f8460" /><TaskItem $w={18} $gap={426} $bg="#6a4468" />
        <Clock>22:38</Clock>
      </Taskbar>
    </Desktop>
  );
}
